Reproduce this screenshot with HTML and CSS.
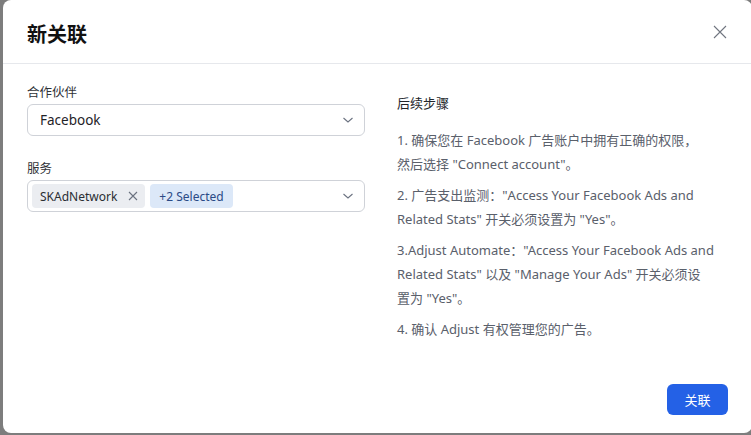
FILE: index.html
```html
<!DOCTYPE html>
<html lang="zh">
<head>
<meta charset="utf-8">
<link rel="stylesheet" href="styles.css">
</head>
<body>
<div class="modal">
  <header class="modal-header">
    <h1 class="modal-title">新关联</h1>
    <button class="close-btn" aria-label="close">
      <svg width="14" height="14" viewBox="0 0 14 14"><path d="M1 1L13 13M13 1L1 13" stroke="#70757f" stroke-width="1.1" fill="none"/></svg>
    </button>
  </header>
  <main class="modal-body">
    <section class="form-col">
      <div class="field">
        <label class="field-label">合作伙伴</label>
        <div class="select">
          <span class="select-value">Facebook</span>
          <svg class="chevron" width="12" height="8" viewBox="0 0 12 8"><path d="M1.5 2L6 6L10.5 2" stroke="#6b7280" stroke-width="1.1" fill="none"/></svg>
        </div>
      </div>
      <div class="field">
        <label class="field-label">服务</label>
        <div class="select select-multi">
          <span class="tag">SKAdNetwork <svg class="tag-x" width="10" height="10" viewBox="0 0 10 10"><path d="M1 1L9 9M9 1L1 9" stroke="#6b7280" stroke-width="1.1" fill="none"/></svg></span>
          <span class="tag tag-more">+2 Selected</span>
          <svg class="chevron" width="12" height="8" viewBox="0 0 12 8"><path d="M1.5 2L6 6L10.5 2" stroke="#6b7280" stroke-width="1.1" fill="none"/></svg>
        </div>
      </div>
    </section>
    <section class="steps-col">
      <h2 class="steps-title">后续步骤</h2>
      <p class="step">1. 确保您在 Facebook 广告账户中拥有正确的权限，<br>然后选择 "Connect account"。</p>
      <p class="step">2. 广告支出监测："Access Your Facebook Ads and Related Stats" 开关必须设置为 "Yes"。</p>
      <p class="step">3.Adjust Automate："Access Your Facebook Ads and Related Stats" 以及 "Manage Your Ads" 开关必须设<br>置为 "Yes"。</p>
      <p class="step">4. 确认 Adjust 有权管理您的广告。</p>
    </section>
  </main>
  <footer class="modal-footer">
    <button class="primary-btn">关联</button>
  </footer>
</div>
</body>
</html>
```
FILE: styles.css
```css
* { box-sizing: border-box; }
html, body {
  margin: 0;
  height: 100%;
  overflow: hidden;
}
body {
  background: #7d7d7d;
  font-family: "Noto Sans", "Noto Sans CJK SC", sans-serif;
  padding-left: 3px;
}
.modal {
  width: 749px;
  height: 433px;
  background: #fff;
  border-radius: 8px;
  display: flex;
  flex-direction: column;
}
.modal-header {
  height: 64px;
  border-bottom: 1px solid #e6e8ec;
  display: flex;
  align-items: center;
  justify-content: space-between;
  padding: 0 24px 0 24px;
  flex: none;
}
.modal-title {
  margin: 0;
  font-size: 20px;
  font-weight: 700;
  color: #111;
  padding-top: 3px;
}
.close-btn {
  background: none;
  border: 0;
  padding: 0;
  width: 14px;
  height: 14px;
  margin-right: 1px;
  display: flex;
}
.modal-body {
  flex: 1;
  display: grid;
  grid-template-columns: 338px 330px;
  column-gap: 32px;
  padding: 19px 24px 0 24px;
}
.form-col {
  display: flex;
  flex-direction: column;
  gap: 23px;
}
.field {
  display: flex;
  flex-direction: column;
  gap: 2px;
}
.field-label {
  font-size: 12.5px;
  line-height: 19px;
  color: #2f3237;
}
.select {
  height: 32px;
  border: 1px solid #cfd2d8;
  border-radius: 6px;
  display: flex;
  align-items: center;
  padding: 0 10px 0 12px;
  gap: 5px;
}
.select-value {
  font-size: 13.5px;
  color: #1f2328;
  flex: 1;
}
.chevron {
  margin-left: auto;
  flex: none;
}
.select-multi {
  padding-left: 4px;
}
.tag {
  height: 24px;
  display: inline-flex;
  align-items: center;
  gap: 11px;
  padding: 0 7px 0 8px;
  background: #ebedf1;
  border-radius: 4px;
  font-size: 12px;
  color: #2a2d33;
}
.tag-x { flex: none; }
.tag-more {
  background: #dce8f8;
  color: #2b4a86;
  padding: 0 9px 0 9px;
}
.steps-col {
  padding-top: 11px;
}
.steps-title {
  margin: 0 0 16px 0;
  font-size: 13px;
  line-height: 18px;
  font-weight: 400;
  color: #23262b;
}
.step {
  margin: 0 0 7px 0;
  font-size: 13px;
  line-height: 24px;
  color: #5a606b;
}
.modal-footer {
  flex: none;
  display: flex;
  justify-content: flex-end;
  padding: 0 24px 18px 24px;
}
.primary-btn {
  width: 61px;
  height: 31px;
  border: 0;
  border-radius: 6px;
  background: #2461e6;
  color: #fff;
  font-family: inherit;
  font-size: 13px;
}
```
